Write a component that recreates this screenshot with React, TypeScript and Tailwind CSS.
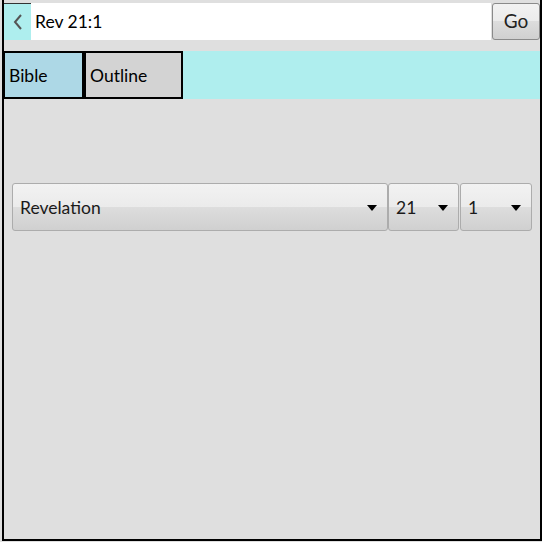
const font = { fontFamily: '"Segoe UI", Lato, "Open Sans", sans-serif' };

// dropdown that looks like an old desktop combo box
const Combo = ({ label, width }: { label: string; width: string }) => (
  <div
    className={`${width} h-[48px] flex items-center justify-between pl-[7px] pr-[10px] pt-[2px] rounded-[3px] border border-[#acacac] bg-[linear-gradient(#f2f2f2_0%,#ebebeb_50%,#dddddd_50%,#d0d0d0_100%)]`}
  >
    <span className="text-[17.5px] text-[#1a1a1a]">{label}</span>
    <span className="w-0 h-0 border-l-[5px] border-r-[5px] border-t-[6px] border-l-transparent border-r-transparent border-t-black" />
  </div>
);

export default function App() {
  return (
    <div className="w-[542px] h-[542px] bg-[#dfdfdf] overflow-hidden" style={font}>
      <div className="ml-[2px] w-[540px] h-[541px] border-l-2 border-r-2 border-b-2 border-black flex flex-col">
        {/* address row */}
        <div className="flex h-[37px] mt-[3px]">
          <button className="w-[27px] h-full bg-[#aeeeee] border-t border-[#333] flex items-center justify-center">
            <svg width="10" height="16" viewBox="0 0 10 16">
              <polyline points="8,1 2,8 8,15" fill="none" stroke="#555" strokeWidth="2" />
            </svg>
          </button>
          <div className="flex-1 bg-white flex items-center pl-[4px] pt-[1px] text-[17.5px] text-black">
            Rev 21:1
          </div>
          <button className="ml-px w-[48px] h-full rounded-[3px] border border-[#8a8a8a] bg-[linear-gradient(#f2f2f2_0%,#ebebeb_50%,#dddddd_50%,#d0d0d0_100%)] text-[19px] text-[#222]">
            Go
          </button>
        </div>

        {/* tabs */}
        <div className="mt-[11px] h-[48px] bg-[#afeeee] flex -ml-px">
          <div className="w-[81px] h-full bg-[#add8e6] border-2 border-black flex items-center pl-[4px] pt-[2px] text-[17.5px] text-black">
            Bible
          </div>
          <div className="w-[99px] h-full bg-[#d3d3d3] border-2 border-black flex items-center pl-[4px] pt-[2px] text-[17.5px] text-black">
            Outline
          </div>
        </div>

        {/* book / chapter / verse */}
        <div className="mt-[84px] pl-[8px] flex">
          <Combo label="Revelation" width="w-[376px]" />
          <Combo label="21" width="w-[71px]" />
          <div className="ml-px">
            <Combo label="1" width="w-[72px]" />
          </div>
        </div>
      </div>
    </div>
  );
}
